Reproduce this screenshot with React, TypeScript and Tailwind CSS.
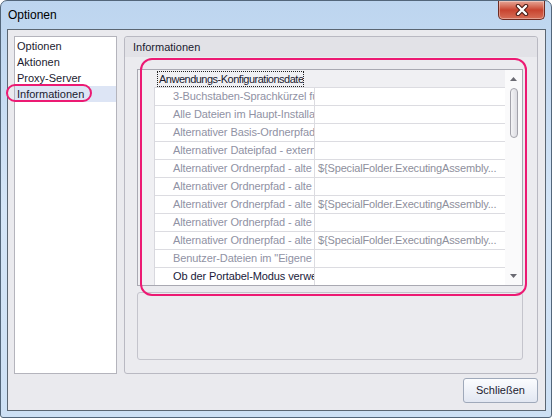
type Row = { name: string; value?: string; active?: boolean };

const pages = ['Optionen', 'Aktionen', 'Proxy-Server', 'Informationen'];

const assemblyPath = '${SpecialFolder.ExecutingAssembly...';

const rows: Row[] = [
  { name: '3-Buchstaben-Sprachkürzel für die Oberfläche' },
  { name: 'Alle Dateien im Haupt-Installationsordner' },
  { name: 'Alternativer Basis-Ordnerpfad' },
  { name: 'Alternativer Dateipfad - externe Konfiguration' },
  { name: 'Alternativer Ordnerpfad - alte Daten', value: assemblyPath },
  { name: 'Alternativer Ordnerpfad - alte Profile' },
  { name: 'Alternativer Ordnerpfad - alte Sitzungen', value: assemblyPath },
  { name: 'Alternativer Ordnerpfad - alte Vorlagen' },
  { name: 'Alternativer Ordnerpfad - alte Protokolle', value: assemblyPath },
  { name: 'Benutzer-Dateien im "Eigene Dateien"-Ordner' },
  { name: 'Ob der Portabel-Modus verwendet wird', active: true },
];

function CloseButton() {
  return (
    <button className="mr-[6px] flex h-[19px] w-[47px] items-center justify-center self-start rounded-b-[5px] border border-t-0 border-[#6d2b22] bg-gradient-to-b from-[#e5a596] via-[#c8432f] to-[#d66e57] shadow-[inset_0_0_0_1px_rgba(255,255,255,0.35)]">
      <svg width="14" height="12" viewBox="0 0 14 12">
        <path d="M3 2 L11 10 M11 2 L3 10" stroke="#4a1c16" strokeWidth="4.5" strokeLinecap="round" />
        <path d="M3 2 L11 10 M11 2 L3 10" stroke="#ffffff" strokeWidth="2.4" strokeLinecap="round" />
      </svg>
    </button>
  );
}

function Scrollbar() {
  return (
    <div className="flex w-[17px] flex-col items-center bg-[#fafafb]">
      <div className="flex h-[18px] items-center justify-center">
        <svg width="7" height="4" viewBox="0 0 7 4">
          <path d="M0 4 L3.5 0 L7 4 Z" fill="#6a6a72" />
        </svg>
      </div>
      <div className="h-[50px] w-[8px] rounded-full border border-[#a3a3ab] bg-gradient-to-r from-[#f4f4f6] to-[#dcdce2]" />
      <div className="flex-1" />
      <div className="flex h-[18px] items-center justify-center">
        <svg width="7" height="4" viewBox="0 0 7 4">
          <path d="M0 0 L7 0 L3.5 4 Z" fill="#6a6a72" />
        </svg>
      </div>
    </div>
  );
}

function PropertyGrid() {
  return (
    <div className="flex h-[217px] w-[386px] border border-[#a9a9b2] bg-white">
      <div className="flex flex-1 flex-col">
        {/* category header */}
        <div className="flex h-[17px] items-center bg-[#f0f0f3] pl-[19px]">
          <span className="block h-[16px] w-[147px] overflow-hidden whitespace-nowrap border border-dotted border-[#222] pl-[1px] leading-[14px] tracking-[-0.5px] text-[#1a1a30]">
            Anwendungs-Konfigurationsdatei
          </span>
        </div>
        <div className="flex flex-1">
          <div className="w-[17px] border-r border-[#d8d8de] bg-[#f0f0f3]" />
          <div className="flex flex-1 flex-col">
            {rows.map((r, i) => (
              <div key={i} className="flex h-[18px] border-t border-[#dcdce1]">
                <div
                  className={
                    'w-[160px] overflow-hidden whitespace-nowrap border-r border-[#dcdce1] pl-[18px] leading-[17px] tracking-[-0.1px] ' +
                    (r.active ? 'text-[#1a1a3a]' : 'text-[#9092a4]')
                  }
                >
                  {r.name}
                </div>
                <div className="flex-1 overflow-hidden whitespace-nowrap pl-[3px] leading-[17px] tracking-[-0.15px] text-[#8e8f9c]">
                  {r.value ?? ''}
                </div>
              </div>
            ))}
          </div>
        </div>
      </div>
      <Scrollbar />
    </div>
  );
}

export default function App() {
  return (
    <div className="relative flex h-[418px] w-[552px] flex-col overflow-hidden rounded-t-[7px] rounded-b-[3px] border border-[#53667a] bg-gradient-to-b from-[#bdd5ef] via-[#d4e5f7] to-[#cde0f4] font-['Liberation_Sans',Arial,sans-serif] text-[11px] text-[#1b1b30]">
      {/* caption */}
      <div className="flex h-[28px] shrink-0">
        <div className="flex flex-1 items-center pl-[7px] text-[12px] text-black">Optionen</div>
        <CloseButton />
      </div>

      {/* client area */}
      <div className="mb-[6px] ml-[6px] mr-[5px] flex flex-1 flex-col border border-[#5b6672] bg-[#eaeaee] pb-[7px] pl-[6px] pr-[7px] pt-[6px]">
        <div className="flex flex-1 gap-[7px]">
          <div className="w-[103px] border border-[#b4b4bc] bg-white pt-px">
            {pages.map((p) => (
              <div
                key={p}
                className={
                  'h-[16px] pl-[2px] leading-[16px] ' + (p === 'Informationen' ? 'bg-[#dde5f5]' : '')
                }
              >
                {p}
              </div>
            ))}
          </div>

          <div className="flex w-[414px] flex-col rounded-[3px] border border-[#b9b9c2] bg-[#ebebef]">
            <div className="flex h-[20px] items-center rounded-t-[3px] bg-[#e2e2e7] pl-[8px]">Informationen</div>
            <div className="flex flex-1 flex-col pb-[13px] pl-[12px] pt-[12px]">
              <PropertyGrid />
              <div className="mt-[6px] w-[386px] flex-1 rounded-[3px] border border-[#c4c4cc]" />
            </div>
          </div>
        </div>

        <div className="mt-[4px] flex justify-end">
          <button className="h-[25px] w-[75px] rounded-[3px] border border-[#9fa9ba] bg-gradient-to-b from-[#fbfcfe] to-[#e2e7f2] text-[11px] text-[#1b1b30]">
            Schließen
          </button>
        </div>
      </div>

      {/* highlight marks */}
      <div className="absolute left-[5px] top-[83px] h-[18px] w-[86px] rounded-[9px] border-2 border-[#ec1a73]" />
      <div className="absolute left-[139px] top-[57px] h-[238px] w-[387px] rounded-[12px] border-2 border-[#ec1a73]" />
    </div>
  );
}
